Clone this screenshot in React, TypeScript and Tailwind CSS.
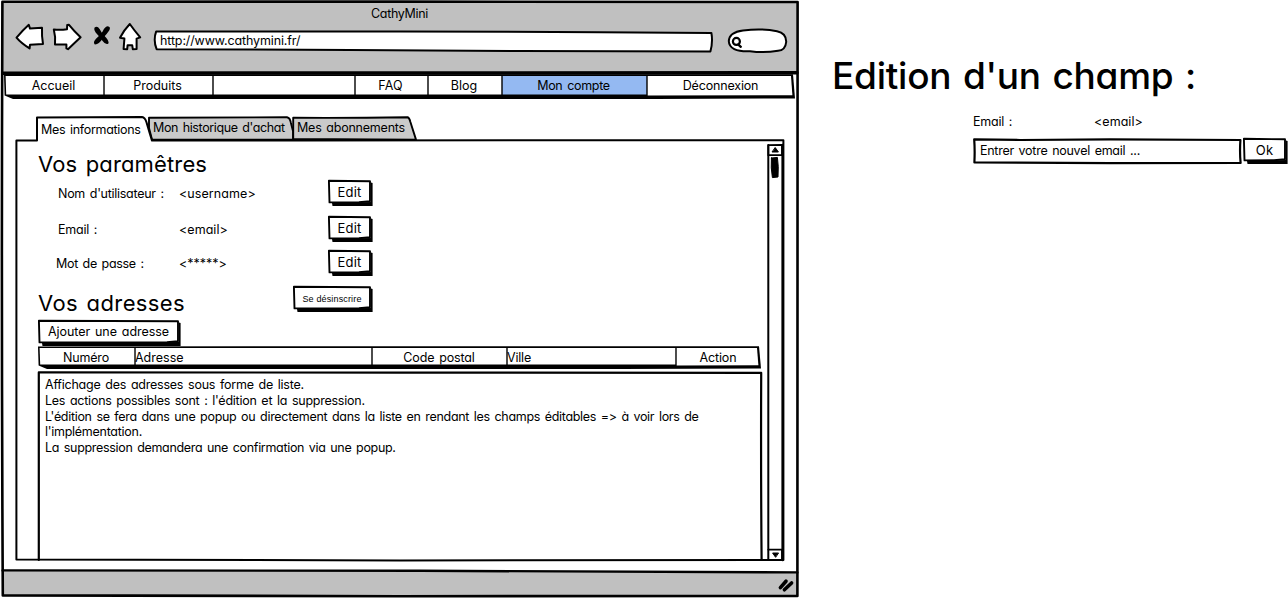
import type { ReactNode } from "react";

type InkProps = { box: string; className?: string; children: ReactNode };

/* Hand-drawn strokes; shapes are written in window coordinates. */
function Ink({ box, className = "", children }: InkProps) {
  return (
    <svg
      viewBox={box}
      preserveAspectRatio="none"
      fill="none"
      stroke="#000"
      strokeWidth="2"
      strokeLinejoin="round"
      strokeLinecap="round"
      aria-hidden="true"
      className={`block shrink-0 overflow-visible ${className}`}
    >
      {children}
    </svg>
  );
}

const backdrop = "pointer-events-none absolute inset-0 h-full w-full";

type SketchButtonProps = { w: number; className: string; children: ReactNode };

function SketchButton({ w, className, children }: SketchButtonProps) {
  const r = w - 2;
  return (
    <button
      type="button"
      className={`relative flex h-[26px] shrink-0 justify-center whitespace-pre pr-[2px] ${className}`}
    >
      <Ink box={`0 0 ${w} 26`} className={backdrop}>
        <path d={`M4 23 L${r} 22 L${r} 2.6 L${w - 0.4} 3 L${w - 0.4} 26 L4.5 26 Z`} fill="#000" stroke="none" />
        <path d={`M0.9 0.8 L${r - 1} 1.3 L${r - 1} 21.2 L${r - 12} 22.2 L1.5 22.4 Z`} fill="#fff" strokeWidth="1.9" />
      </Ink>
      <span className="relative">{children}</span>
    </button>
  );
}

type Cell = { label: string; w: number; className: string; fill?: string };

function Bar({ cells, h, className }: { cells: Cell[]; h: number; className: string }) {
  const total = cells.reduce((sum, c) => sum + c.w, 0);
  const floor = h - 4.4;
  let x = 0;
  const blocks = cells.map((c, i) => {
    const left = i === 0 ? 1.6 : x + 0.7;
    x += c.w;
    const last = i === cells.length - 1;
    const right = last ? total - 4 : x - 0.7;
    return (
      <path
        key={i}
        d={`M${left} 2 L${right} 2 L${last ? right + 1.4 : right} ${last ? floor + 0.6 : floor} L${i === 0 ? left + 0.6 : left} ${last ? floor + 0.9 : floor} Z`}
        fill={c.fill ?? "#fff"}
      />
    );
  });
  return (
    <div className={`relative flex shrink-0 ${className}`}>
      <Ink box={`0 0 ${total} ${h}`} className={backdrop}>
        <g stroke="none">
          <path
            d={`M0 0.4 L${total - 2} 0.2 L${total} ${h - 0.5} L${total - 140} ${h} L9 ${h} L0.6 ${h - 3.5} Z`}
            fill="#000"
          />
          {blocks}
        </g>
      </Ink>
      {cells.map((c, i) => (
        <span key={i} className={`relative shrink-0 whitespace-pre pt-[4px] ${c.className}`}>
          {c.label}
        </span>
      ))}
    </div>
  );
}

const menu: Cell[] = [
  { label: "Accueil", w: 100, className: "w-[100px] pr-[1px] text-center" },
  { label: "Produits", w: 109, className: "w-[109px] pr-[2px] text-center" },
  { label: "", w: 142, className: "w-[142px]" },
  { label: "FAQ", w: 73, className: "w-[73px] pr-[2px] text-center tracking-[0.2px]" },
  { label: "Blog", w: 74, className: "w-[74px] pr-[2px] text-center" },
  {
    label: "Mon compte",
    w: 145,
    fill: "#94b9f2",
    className: "w-[145px] pr-[2px] text-center tracking-[-0.3px] [word-spacing:1.5px]",
  },
  { label: "Déconnexion", w: 148, className: "w-[148px] pr-[1px] text-center tracking-[-0.17px]" },
];

const columns: Cell[] = [
  { label: "Numéro", w: 97, className: "w-[97px] pr-[1px] text-center tracking-[-0.15px]" },
  { label: "Adresse", w: 237, className: "w-[237px]" },
  { label: "Code postal", w: 135, className: "w-[135px] pr-[1px] text-center tracking-[-0.15px] [word-spacing:1.5px]" },
  { label: "Ville", w: 169, className: "w-[169px] tracking-[-0.2px]" },
  { label: "Action", w: 85, className: "w-[85px] pr-[1px] text-center tracking-[-0.12px]" },
];

const settings = [
  {
    label: "Nom d'utilisateur :",
    value: "<username>",
    row: "mt-[2px] ml-[20px]",
    name: "w-[121px] tracking-[-0.28px]",
    val: "w-[149px] tracking-[0.08px]",
  },
  {
    label: "Email :",
    value: "<email>",
    row: "mt-[10px] ml-[20px]",
    name: "w-[121px] tracking-[-0.24px]",
    val: "w-[149px] tracking-[0.04px]",
  },
  {
    label: "Mot de passe :",
    value: "<*****>",
    row: "mt-[8px] ml-[18px]",
    name: "w-[123px] tracking-[-0.32px]",
    val: "w-[149px]",
  },
];

function BrowserHeader() {
  return (
    <header className="flex h-[72px] shrink-0 flex-col bg-[#c0c0c0]">
      <h1 className="mt-[4px] h-4 pr-[1px] text-center tracking-[-0.33px]">CathyMini</h1>
      <div className="flex items-start pl-[12px]">
        <Ink box="14 22 32 30" className="h-[30px] w-[32px]">
          <path d="M16.5 37.6 Q23 30 28.8 24.8 L30 28.6 L42 27.8 Q41.6 36 43 44 L30 44.8 L29.6 48.4 Q21 43 16.5 37.6 Z" fill="#fff" />
        </Ink>
        <Ink box="46 22 38 30" className="h-[30px] w-[38px]">
          <path d="M53.8 29.4 Q60 30.2 67 29.2 L67.2 25 L69 24.8 Q74 31 80.6 37.2 Q74 43.4 68 49.2 L66.4 48.4 V44.6 L55 44.6 Q55.8 37 53.8 29.4 Z" fill="#fff" />
        </Ink>
        <Ink box="84 22 32 30" className="h-[30px] w-[32px]">
          <g fill="#000" stroke="none">
            <path d="M94.6 27.4 Q97.4 25.6 99.6 29 Q101.6 33 104.6 36 Q109.6 41 108.4 43.6 Q105.8 45.4 102.6 41 Q100.4 37.4 97.4 34.4 Q93.2 30 94.6 27.4 Z" />
            <path d="M108.4 26.4 Q111 27 109.2 30.6 Q106.6 34.6 103 38 Q99 44.6 94.8 44.4 Q92.6 42.6 96 38.8 Q100.2 35.4 102.6 31.4 Q105.4 26 108.4 26.4 Z" />
          </g>
        </Ink>
        <Ink box="116 22 30 30" className="h-[30px] w-[30px]">
          <path d="M129.8 24 Q134 30 140.2 37.4 L136.6 38.6 L136.6 49 L132.8 49.2 L132.2 45.2 H127.6 L127.2 49.2 L123.6 49 L124.4 38.6 L120 37.8 Q124 30 129.8 24 Z" fill="#fff" />
        </Ink>
        <div className="relative ml-[8px] mt-[8px] h-[23px] w-[560px] pl-[6px] pt-[3px] tracking-[-0.13px]">
          <Ink box="154 30 560 23" className={backdrop}>
            <path d="M156.2 31.4 L400 31.4 L600 32.2 L711.4 33 Q713 42 710.4 51.6 L520 51 L350 50 L156.6 49.2 Q153 40 156.2 31.4 Z" fill="#fff" />
          </Ink>
          <span className="relative">http://www.cathymini.fr/</span>
        </div>
        <Ink box="728 28 60 26" className="ml-[14px] mt-[6px] h-[26px] w-[60px]">
          <path d="M728.8 41 Q729.4 32 743 30.4 Q762 28.2 777 31.2 Q786.4 33 786.2 42 Q785.4 50.4 778 50.8 Q764 53.2 750 51.2 Q729.2 52 728.8 41 Z" fill="#fff" />
          <circle cx="736.4" cy="41.4" r="3.5" strokeWidth="2.2" />
          <path d="M738.4 44.6 L740.8 46.8" strokeWidth="2.4" />
        </Ink>
      </div>
    </header>
  );
}

function AccountPanel() {
  return (
    <section className="relative ml-[12px] mt-[17px] h-[446px] w-[772px] shrink-0">
      <Ink box="14 116 772 446" className={backdrop}>
        <path d="M293.2 139 V117.8 Q350 118.2 407.6 117.2 Q409.4 117.6 410.4 122 L416 139.6 Z" fill="#cacaca" strokeWidth="1.9" />
        <path d="M149 117.8 L287 117.2 Q290 117.8 290.8 122.4 L293 131 V139.8 H152 L149 128 Z" fill="#cacaca" strokeWidth="1.9" />
        <path d="M152 140.6 L300 140.4 L783.4 140.2 V560 L400 560.4 L16.4 559.4 L16.4 140.4 H37 V117.6 L142 117 Q145 117.4 146.4 122 Q149 131 152 140.6 Z" fill="#fff" />
      </Ink>
      <div className="relative flex h-[24px] pl-[27px]">
        <button type="button" className="flex w-[112px] whitespace-pre pt-[6px] tracking-[-0.3px] [word-spacing:1.5px]">
          Mes informations
        </button>
        <button type="button" className="flex w-[144px] whitespace-pre pt-[4px] tracking-[-0.38px] [word-spacing:1.5px]">
          Mon historique d'achat
        </button>
        <button type="button" className="flex w-[116px] whitespace-pre pt-[4px] tracking-[-0.22px] [word-spacing:1.5px]">
          Mes abonnements
        </button>
      </div>
      <div className="relative flex h-[422px] justify-between">
        <div className="flex w-[749px] flex-col pl-[24px] pt-[10px]">
          <h2 className="h-7 whitespace-pre text-[22px] leading-7 tracking-[0.15px] [word-spacing:2px]">Vos paramêtres</h2>
          {settings.map((s) => (
            <div key={s.label} className={`flex h-[26px] shrink-0 whitespace-pre [word-spacing:1.5px] ${s.row}`}>
              <span className={`shrink-0 pt-[6px] ${s.name}`}>{s.label}</span>
              <span className={`shrink-0 pt-[6px] ${s.val}`}>{s.value}</span>
              <SketchButton w={45} className="w-[45px] pt-[4px] text-[13px] tracking-[0.15px]">
                Edit
              </SketchButton>
            </div>
          ))}
          <div className="mt-[10px] flex h-[27px] shrink-0">
            <h2 className="w-[255px] shrink-0 whitespace-pre pt-[3px] text-[22px] leading-7 tracking-[0.39px] [word-spacing:2px]">
              Vos adresses
            </h2>
            <SketchButton w={80} className="w-[80px] pt-[5px] font-['Liberation_Sans',sans-serif] text-[9px] tracking-[0.15px]">
              Se désinscrire
            </SketchButton>
          </div>
          <SketchButton w={143} className="mt-[7px] w-[143px] pt-[4px] tracking-[-0.06px] [word-spacing:1.5px]">
            Ajouter une adresse
          </SketchButton>
          <Bar cells={columns} h={23} className="h-[23px] w-[723px]" />
          <div className="relative mt-[2px] h-[189px] w-[725px] shrink-0 whitespace-pre pl-[7px] pt-[6px] leading-[15.75px] [word-spacing:1.5px]">
            <Ink box="38 371 725 189" className={backdrop}>
              <path d="M38.8 560 V372.4 L400 372.6 L761.2 372.8 Q760.8 470 761.6 560" strokeWidth="2.2" />
            </Ink>
            <p className="relative tracking-[-0.23px]">Affichage des adresses sous forme de liste.</p>
            <p className="relative tracking-[-0.25px]">Les actions possibles sont : l'édition et la suppression.</p>
            <p className="relative tracking-[-0.31px]">
              L'édition se fera dans une popup ou directement dans la liste en rendant les champs éditables =&gt; à voir lors de
            </p>
            <p className="relative tracking-[-0.27px]">l'implémentation.</p>
            <p className="relative tracking-[-0.32px]">La suppression demandera une confirmation via une popup.</p>
          </div>
        </div>
        <Ink box="766 140 20 422" className="h-[422px] w-[20px]">
          <path d="M768.3 145 V560" />
          <path d="M782.6 145 V560" strokeWidth="2.4" />
          <path d="M768.3 145.2 L782 144.8 V155 L768.3 155.2 Z M768.3 549.6 H782 V559.6" strokeWidth="1.8" />
          <path d="M775.4 147.8 L778.4 152 H772.4 Z M775.4 557 L772.6 553 H778.2 Z" fill="#000" strokeWidth="1" />
          <path d="M771.4 158 L777.4 157.4 Q778.8 166 778 177 L772.4 177.6 Q770.6 168 771.4 158 Z" fill="#000" strokeWidth="1" />
        </Ink>
      </div>
    </section>
  );
}

function BrowserWindow() {
  return (
    <main className="relative flex h-[598px] w-[800px] shrink-0 flex-col p-[2px]">
      <BrowserHeader />
      <Bar cells={menu} h={25} className="ml-[2px] h-[25px] w-[791px]" />
      <AccountPanel />
      <Ink box="2 569 796 27" className="mt-[7px] h-[27px] w-[796px]">
        <path d="M2 570.4 L420 570.6 L798 572.6 V596 H2 Z" fill="#c0c0c0" stroke="none" />
        <path d="M2.6 570.4 L420 570.8 L797.4 572.4" strokeWidth="2.4" />
        <path d="M780.4 587.6 L786 581.2 M784.4 589.8 L791.6 583" strokeWidth="3.6" />
      </Ink>
      <Ink box="0 0 800 598" className={backdrop}>
        <path d="M2.4 1.8 L400 1.6 L797.6 2 Q798 300 797.4 596 L400 596.2 L2.8 595.4 Q1.2 300 2.4 1.8 Z" strokeWidth="2.6" />
        <path d="M3 73.2 L797 72.8" strokeWidth="3.4" />
      </Ink>
    </main>
  );
}

function FieldEditor() {
  return (
    <aside className="flex w-[488px] shrink-0 flex-col pt-[51px]">
      <h2 className="h-[50px] whitespace-pre pl-[32px] text-[37px] font-[450] leading-[50px] tracking-[-0.25px] [word-spacing:2px]">
        Edition d'un champ :
      </h2>
      <div className="mt-[13px] flex h-4 whitespace-pre pl-[173px]">
        <span className="w-[121px] shrink-0 tracking-[-0.24px] [word-spacing:1.5px]">Email :</span>
        <span className="tracking-[0.04px]">&lt;email&gt;</span>
      </div>
      <div className="mt-[8px] flex h-[27px] pl-[173px]">
        <div className="relative h-[26px] w-[269px] shrink-0 whitespace-pre pl-[7px] pt-[5px] tracking-[-0.27px] [word-spacing:1.5px]">
          <Ink box="973 138 269 26" className={backdrop}>
            <path d="M974.2 139.4 L1020 140 L1110 139.4 L1240.4 140 Q1239.6 152 1240.6 162.8 L1110 163.2 L974.4 162.4 Q975 150 974.2 139.4 Z" fill="#fff" strokeWidth="2.2" />
          </Ink>
          <span className="relative">Entrer votre nouvel email ...</span>
        </div>
        <SketchButton w={45} className="ml-[1px] w-[45px] pt-[4px] text-[13px] tracking-[0.1px]">
          Ok
        </SketchButton>
      </div>
    </aside>
  );
}

export default function App() {
  return (
    <div className="flex h-[598px] w-[1288px] overflow-hidden bg-white font-['Inter',sans-serif] text-[12.5px] leading-4 text-black [font-feature-settings:'cv11']">
      <BrowserWindow />
      <FieldEditor />
    </div>
  );
}
